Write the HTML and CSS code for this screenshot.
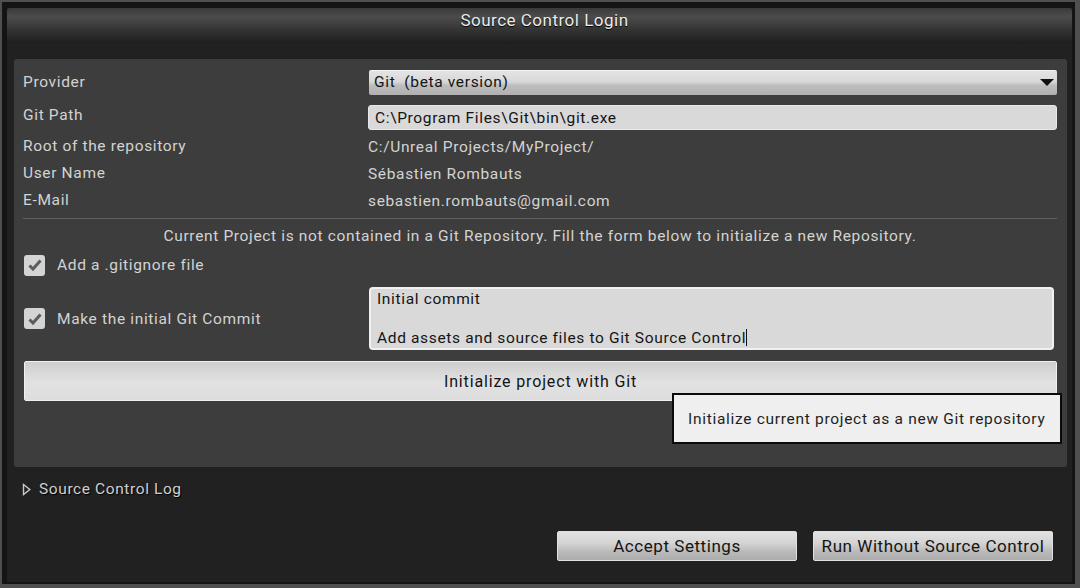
FILE: index.html
```html
<!DOCTYPE html>
<html>
<head>
<meta charset="utf-8">
<title>Source Control Login</title>
<link rel="stylesheet" href="styles.css">
</head>
<body>
<div class="window">
  <div class="titlebar">Source Control Login</div>
  <div class="panel">
    <div class="form">
      <div class="row row-field">
        <span class="label">Provider</span>
        <div class="dropdown"><span>Git&nbsp; (beta version)</span>
          <svg class="arrow" width="14" height="8" viewBox="0 0 14 8"><path d="M0 0 H14 L7 7 Z" fill="#111"/></svg>
        </div>
      </div>
      <div class="row row-field">
        <span class="label up">Git Path</span>
        <div class="textfield">C:\Program Files\Git\bin\git.exe</div>
      </div>
      <div class="row row-text">
        <span class="label">Root of the repository</span>
        <span class="value">C:/Unreal Projects/MyProject/</span>
      </div>
      <div class="row row-text">
        <span class="label">User Name</span>
        <span class="value">Sébastien Rombauts</span>
      </div>
      <div class="row row-text">
        <span class="label">E-Mail</span>
        <span class="value">sebastien.rombauts@gmail.com</span>
      </div>
    </div>
    <div class="separator"></div>
    <div class="info">Current Project is not contained in a Git Repository. Fill the form below to initialize a new Repository.</div>
    <div class="check-row first">
      <span class="checkbox"><svg width="20" height="20" viewBox="0 0 20 20"><path d="M4.5 10.5 L8 14 L15.5 5.5" fill="none" stroke="#5c5c5c" stroke-width="3"/></svg></span>
      <span class="label">Add a .gitignore file</span>
    </div>
    <div class="commit-row">
      <div class="check-row">
        <span class="checkbox"><svg width="20" height="20" viewBox="0 0 20 20"><path d="M4.5 10.5 L8 14 L15.5 5.5" fill="none" stroke="#5c5c5c" stroke-width="3"/></svg></span>
        <span class="label">Make the initial Git Commit</span>
      </div>
      <div class="textarea">
        <div>Initial commit</div>
        <div>&nbsp;</div>
        <div>Add assets and source files to Git Source Control<span class="caret"></span></div>
      </div>
    </div>
    <div class="init-wrap">
      <div class="btn-init">Initialize project with Git</div>
      <div class="tooltip">Initialize current project as a new Git repository</div>
    </div>
  </div>
  <div class="log">
    <svg width="9" height="13" viewBox="0 0 9 13"><path d="M1.5 1.5 L7.8 6.5 L1.5 11.5 Z" fill="none" stroke="#c8c8c8" stroke-width="1.4"/></svg>
    <span>Source Control Log</span>
  </div>
  <div class="footer">
    <div class="btn">Accept Settings</div>
    <div class="btn">Run Without Source Control</div>
  </div>
</div>
</body>
</html>
```

FILE: styles.css
```css
* { box-sizing: border-box; }
html, body {
  margin: 0;
  padding: 0;
  width: 1080px;
  height: 588px;
  overflow: hidden;
  background: #4f4f4f;
  font-family: Roboto, "Liberation Sans", sans-serif;
}
.window {
  margin: 2px 0 0 2px;
  width: 1073px;
  height: 582px;
  border-style: solid;
  border-color: #141414;
  border-width: 6px 3px 2px 5px;
  background: #212121;
  display: flex;
  flex-direction: column;
  position: relative;
}
.titlebar {
  height: 35px;
  flex: none;
  background: linear-gradient(#3a3a3a 0%, #4c4c4c 25%, #323232 65%, #1f1f1f 100%);
  border-radius: 3px 3px 0 0;
  color: #ececec;
  font-size: 17px;
  letter-spacing: 0.5px;
  text-align: center;
  line-height: 24px;
  padding-left: 10px;
  text-shadow: 0 1px 1px #000;
}
.panel {
  margin: 16px 5px 0 7px;
  height: 408px;
  flex: none;
  background: #3d3d3d;
  border-radius: 3px;
  padding: 11px 10px 0 9px;
  color: #d3d3d3;
  font-size: 15.5px;
  letter-spacing: 0.65px;
}
.form { display: flex; flex-direction: column; }
.row {
  display: grid;
  grid-template-columns: 345px 1fr;
  align-items: center;
}
.row-field { height: 25px; }
.row-field + .row-field { margin-top: 10px; }
.row-text { height: 27px; }
.row-field + .row-text { margin-top: 3px; }
.label { color: #d3d3d3; }
.row .label { position: relative; top: -1px; }
.row .label.up { top: -3px; }
.value { color: #d3d3d3; }
.dropdown {
  height: 25px;
  margin-left: 1px;
  border-radius: 2px;
  background: linear-gradient(#e4e4e4 0%, #d8d8d8 45%, #bdbdbd 60%, #b0b0b0 100%);
  border-top: 1px solid #f2f2f2;
  color: #141414;
  display: flex;
  align-items: center;
  justify-content: space-between;
  padding: 0 3px 0 5px;
}
.dropdown span { position: relative; top: -1px; }
.textfield {
  height: 25px;
  border-radius: 3px;
  background: #d9d9d9;
  border: 1px solid #e8e8e8;
  color: #141414;
  display: flex;
  align-items: center;
  padding-left: 6px;
}
.separator {
  margin-top: 4px;
  height: 1px;
  background: #606060;
}
.info {
  margin-top: 8px;
  height: 18px;
  line-height: 18px;
  text-align: center;
}
.check-row {
  display: flex;
  align-items: center;
  gap: 12px;
  padding-left: 1px;
}
.check-row.first { margin-top: 10px; height: 20px; }
.checkbox {
  width: 21px;
  height: 21px;
  border-radius: 3px;
  background: #d4d4d4;
  display: flex;
  align-items: center;
  justify-content: center;
}
.commit-row {
  margin-top: 12px;
  display: grid;
  grid-template-columns: 346px 1fr;
  align-items: center;
}
.textarea {
  height: 63px;
  margin-right: 3px;
  background: #d9d9d9;
  border: 2px solid #f0f0f0;
  border-radius: 4px;
  color: #141414;
  padding: 1px 0 0 6px;
  line-height: 19.5px;
}
.caret {
  display: inline-block;
  width: 1px;
  height: 17px;
  background: #111;
  vertical-align: -3px;
  margin-left: 0;
}
.init-wrap {
  position: relative;
  margin-top: 11px;
}
.btn-init {
  height: 40px;
  margin-left: 1px;
  border: 1px solid #f0f0f0;
  border-radius: 2px;
  background: linear-gradient(#cecece 0%, #e2e2e2 55%, #dddddd 100%);
  color: #141414;
  font-size: 16px;
  letter-spacing: 0.85px;
  display: flex;
  align-items: center;
  justify-content: center;
}
.tooltip {
  position: absolute;
  left: 649px;
  top: 32px;
  width: 390px;
  height: 51px;
  background: #efefef;
  border: 2px solid #0a0a0a;
  color: #1e1e1e;
  font-size: 15.5px;
  letter-spacing: 0.7px;
  padding-left: 14px;
  display: flex;
  align-items: center;
}
.log {
  margin: 13px 0 0 15px;
  height: 18px;
  display: flex;
  align-items: center;
  gap: 8px;
  color: #cfcfcf;
  font-size: 15.5px;
  letter-spacing: 0.6px;
  text-shadow: 1px 1px 1px #000;
}
.footer {
  margin-top: auto;
  margin-bottom: 21px;
  display: flex;
  justify-content: flex-end;
  gap: 16px;
  padding-right: 19px;
}
.btn {
  width: 240px;
  height: 30px;
  border: 1px solid #e0e0e0;
  border-radius: 2px;
  background: linear-gradient(#e2e2e2 0%, #d4d4d4 40%, #bababa 70%, #acacac 100%);
  color: #141414;
  font-size: 17px;
  letter-spacing: 0.55px;
  display: flex;
  align-items: center;
  justify-content: center;
}
```
